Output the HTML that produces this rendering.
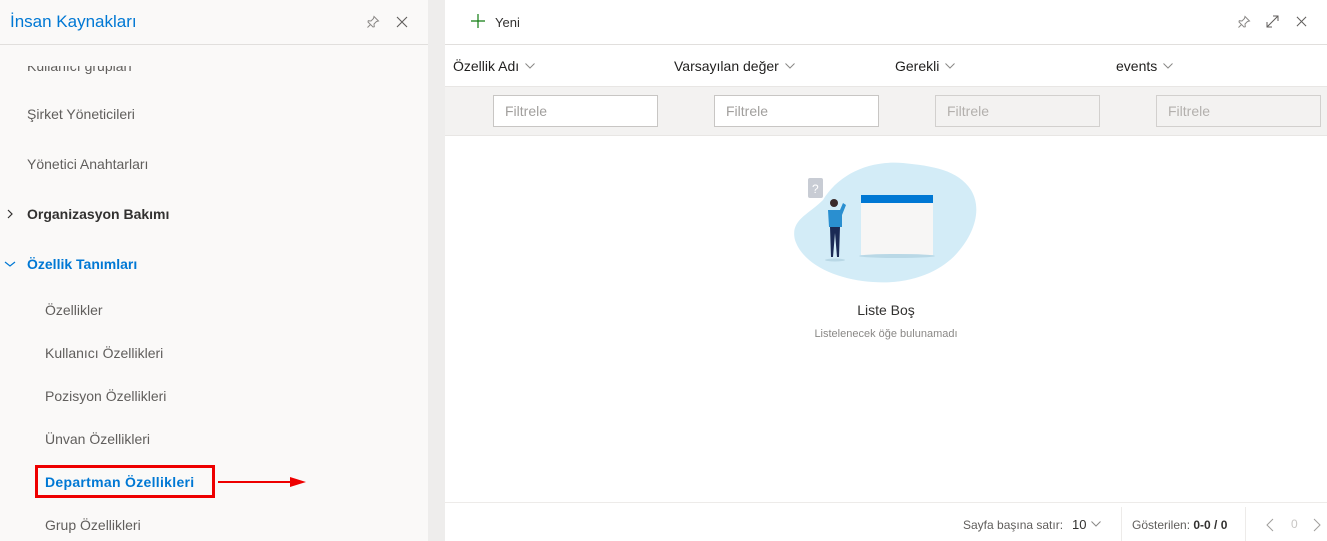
<!DOCTYPE html>
<html><head><meta charset="utf-8"><style>
*{box-sizing:border-box;margin:0;padding:0}
body{width:1327px;height:541px;overflow:hidden;font-family:"Segoe UI","Liberation Sans",sans-serif;background:#fff;position:relative;color:#323130}
.left{position:absolute;left:0;top:0;width:428px;height:541px;background:#faf9f8}
.gap{position:absolute;left:428px;top:0;width:17px;height:541px;background:#eeedec}
.lh{height:45px;border-bottom:1px solid #e1dfdd;position:relative}
.lh .t{position:absolute;left:10px;top:12px;font-size:17px;color:#0078d4}
.it{position:absolute;font-size:14px;color:#605e5c;margin-top:2px}
.b{font-weight:bold;color:#323130}
.abs{position:absolute}
.main{position:absolute;left:445px;top:0;width:882px;height:541px}
.ch{position:absolute;top:58px;font-family:"Liberation Sans",sans-serif;font-size:14px;color:#201f1e}
.ch svg{margin-left:6px;vertical-align:2px}
.f{position:absolute;top:95px;width:165px;height:32px;border:1px solid #c8c6c4;background:#fff;font-family:"Liberation Sans",sans-serif;font-size:14px;color:#a19f9d;padding:7px 11px}
.f.d{background:#f3f2f1;border-color:#d2d0ce;color:#b3b0ad}
</style></head><body>
<div class="left">
 <div class="lh"><div class="t">İnsan Kaynakları</div>
  <svg class="abs" style="left:366px;top:15px" width="14" height="14" viewBox="0 0 14 14" fill="none" stroke="#8a8886" stroke-width="1"><path d="M8 1.5l4.5 4.5-2 .5-2.5 2.5.3 2.7-1.3.3-5-5 .3-1.3 2.7.3L7.5 3.5z M4.5 9.5L1.5 12.5"/></svg>
  <svg class="abs" style="left:396px;top:16px" width="12" height="12" viewBox="0 0 12 12" stroke="#605e5c" stroke-width="1.1"><path d="M1 1l10 10M11 1L1 11"/></svg>
 </div>
 <div class="it" style="left:27px;top:56px;clip-path:inset(8px 0 0 0)">Kullanıcı grupları</div>
 <div class="it" style="left:27px;top:104px">Şirket Yöneticileri</div>
 <div class="it" style="left:27px;top:154px">Yönetici Anahtarları</div>
 <svg class="abs" style="left:5px;top:209px" width="10" height="10" viewBox="0 0 10 10" fill="none" stroke="#323130" stroke-width="1.2"><path d="M3 1l4 4-4 4"/></svg>
 <div class="it b" style="left:27px;top:204px">Organizasyon Bakımı</div>
 <svg class="abs" style="left:4px;top:259px" width="12" height="10" viewBox="0 0 12 10" fill="none" stroke="#0078d4" stroke-width="1.2"><path d="M1 3l5 4 5-4"/></svg>
 <div class="it b" style="left:27px;top:254px;color:#0078d4">Özellik Tanımları</div>
 <div class="it" style="left:45px;top:300px">Özellikler</div>
 <div class="it" style="left:45px;top:343px">Kullanıcı Özellikleri</div>
 <div class="it" style="left:45px;top:386px">Pozisyon Özellikleri</div>
 <div class="it" style="left:45px;top:429px">Ünvan Özellikleri</div>
 <div class="abs" style="left:35px;top:465px;width:180px;height:33px;border:3px solid #e00;"></div>
 <div class="it b" style="left:45px;top:472px;color:#0078d4;letter-spacing:0.3px">Departman Özellikleri</div>
 <div class="abs" style="left:218px;top:481px;width:76px;height:2px;background:#e00"></div>
 <svg class="abs" style="left:290px;top:477px" width="16" height="10"><path d="M0 0L16 5 0 10z" fill="#e00"/></svg>
 <div class="it" style="left:45px;top:515px">Grup Özellikleri</div>
</div>
<div class="gap"></div>
<div class="main">
 <div class="abs" style="left:0;top:0;width:882px;height:45px;border-bottom:1px solid #e1dfdd"></div>
 <svg class="abs" style="left:25px;top:13px" width="16" height="16" viewBox="0 0 16 16" stroke="#107c10" stroke-width="1.2"><path d="M8 1v14M1 8h14"/></svg>
 <div class="abs" style="left:50px;top:15px;font-size:13px;color:#323130">Yeni</div>
 <svg class="abs" style="left:792px;top:15px" width="14" height="14" viewBox="0 0 14 14" fill="none" stroke="#8a8886" stroke-width="1"><path d="M8 1.5l4.5 4.5-2 .5-2.5 2.5.3 2.7-1.3.3-5-5 .3-1.3 2.7.3L7.5 3.5z M4.5 9.5L1.5 12.5"/></svg>
 <svg class="abs" style="left:821px;top:15px" width="13" height="13" viewBox="0 0 13 13" fill="none" stroke="#605e5c" stroke-width="1"><path d="M1 12L12 1M7 1h5v5M1 7v5h5"/></svg>
 <svg class="abs" style="left:851px;top:16px" width="11" height="11" viewBox="0 0 12 12" stroke="#605e5c" stroke-width="1.1"><path d="M1 1l10 10M11 1L1 11"/></svg>
 <div class="ch" style="left:8px">Özellik Adı<svg width="10" height="6" viewBox="0 0 10 6" fill="none" stroke="#8a8886"><path d="M0.5 0.5l4.5 4.5 4.5-4.5"/></svg></div>
 <div class="ch" style="left:229px">Varsayılan değer<svg width="10" height="6" viewBox="0 0 10 6" fill="none" stroke="#8a8886"><path d="M0.5 0.5l4.5 4.5 4.5-4.5"/></svg></div>
 <div class="ch" style="left:450px">Gerekli<svg width="10" height="6" viewBox="0 0 10 6" fill="none" stroke="#8a8886"><path d="M0.5 0.5l4.5 4.5 4.5-4.5"/></svg></div>
 <div class="ch" style="left:671px">events<svg width="10" height="6" viewBox="0 0 10 6" fill="none" stroke="#8a8886"><path d="M0.5 0.5l4.5 4.5 4.5-4.5"/></svg></div>
 <div class="abs" style="left:0;top:86px;width:882px;height:50px;background:#f3f2f1;border-top:1px solid #e8e6e4;border-bottom:1px solid #e8e6e4"></div>
 <div class="f" style="left:48px">Filtrele</div>
 <div class="f" style="left:269px">Filtrele</div>
 <div class="f d" style="left:490px">Filtrele</div>
 <div class="f d" style="left:711px">Filtrele</div>
 <svg class="abs" style="left:348px;top:160px" width="186" height="125" viewBox="0 0 186 125">
  <path d="M30 40C45 15 75 0 110 3 140 6 165 10 178 30 190 50 180 75 165 92 150 110 120 125 80 122 45 120 10 105 2 80-3 60 15 55 30 40z" fill="#d3ecf7"/>
  <rect x="15" y="18" width="15" height="20" rx="2" fill="#c8ccd4"/><text x="19" y="33" font-size="12" fill="#fff" font-family="Liberation Sans">?</text>
  <rect x="68" y="35" width="72" height="60" fill="#f7f6f5"/><rect x="68" y="35" width="72" height="8" fill="#0078d4"/>
  <ellipse cx="104" cy="96" rx="38" ry="2" fill="#b9d8e6"/>
  <circle cx="41" cy="43" r="4" fill="#3b2a2a"/>
  <path d="M35 50h12l3 -7 3 2-4 10v12H36z" fill="#2a8fd0"/>
  <path d="M37 67h10l-1 30h-2l-2-24-2 24h-2z" fill="#1b2a55"/>
  <ellipse cx="42" cy="100" rx="10" ry="1.5" fill="#b9d8e6"/>
 </svg>
 <div class="abs" style="left:0;width:882px;top:302px;text-align:center;font-size:14px;color:#323130">Liste Boş</div>
 <div class="abs" style="left:0;width:882px;top:328px;text-align:center;font-size:11px;color:#8a8886">Listelenecek öğe bulunamadı</div>
 <div class="abs" style="left:0;top:502px;width:882px;height:1px;background:#edebe9"></div>
 <div class="abs" style="left:518px;top:518px;font-size:12px;color:#605e5c">Sayfa başına satır:</div>
 <div class="abs" style="left:627px;top:517px;font-size:13px;color:#323130">10</div>
 <svg class="abs" style="left:646px;top:521px" width="10" height="6" viewBox="0 0 10 6" fill="none" stroke="#8a8886"><path d="M0.5 0.5l4.5 4.5 4.5-4.5"/></svg>
 <div class="abs" style="left:676px;top:507px;width:1px;height:34px;background:#edebe9"></div>
 <div class="abs" style="left:687px;top:518px;font-size:12px;color:#605e5c">Gösterilen: <b style="color:#323130;font-weight:600">0-0 / 0</b></div>
 <div class="abs" style="left:800px;top:507px;width:1px;height:34px;background:#edebe9"></div>
 <svg class="abs" style="left:820px;top:518px" width="10" height="14" viewBox="0 0 10 14" fill="none" stroke="#a19f9d"><path d="M8 1L2 7l6 6"/></svg>
 <div class="abs" style="left:846px;top:517px;font-size:12px;color:#c8c6c4">0</div>
 <svg class="abs" style="left:867px;top:518px" width="10" height="14" viewBox="0 0 10 14" fill="none" stroke="#a19f9d"><path d="M2 1l6 6-6 6"/></svg>
</div>
</body></html>
